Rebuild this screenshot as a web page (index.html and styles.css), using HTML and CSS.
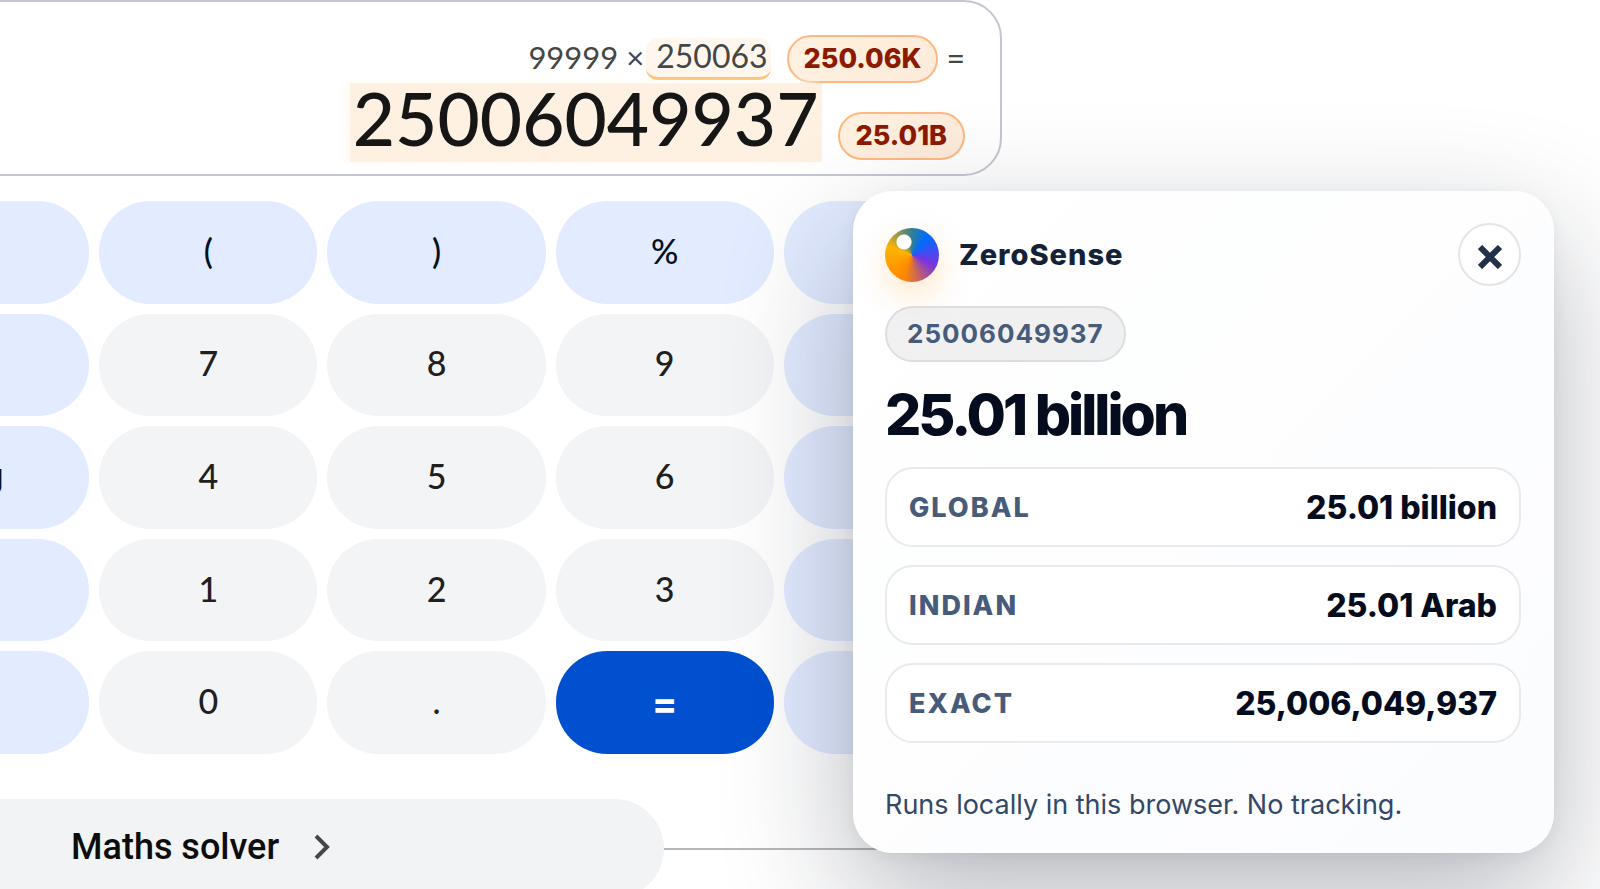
FILE: index.html
```html
<!DOCTYPE html>
<html lang="en">
<head>
    <meta charset="UTF-8">
    <title>ZeroSense</title>
    <link rel="stylesheet" href="styles.css">
</head>
<body>
    <main class="calculator">
        <div class="display">
            <div class="expression">
                <span class="term">99999 ×</span>
                <span class="operand">250063</span>
                <span class="chip">250.06K</span>
                <span class="equals">=</span>
            </div>
            <div class="answer">
                <span class="result">25006049937</span>
                <span class="chip">25.01B</span>
            </div>
        </div>

        <div class="keys">
            <button class="key function" aria-label="factorial"></button>
            <button class="key function">(</button>
            <button class="key function">)</button>
            <button class="key function">%</button>
            <button class="key function" aria-label="all clear"></button>

            <button class="key function" aria-label="natural logarithm"></button>
            <button class="key">7</button>
            <button class="key">8</button>
            <button class="key">9</button>
            <button class="key function" aria-label="divide"></button>

            <button class="key function word">log</button>
            <button class="key">4</button>
            <button class="key">5</button>
            <button class="key">6</button>
            <button class="key function" aria-label="multiply"></button>

            <button class="key function" aria-label="square root"></button>
            <button class="key">1</button>
            <button class="key">2</button>
            <button class="key">3</button>
            <button class="key function" aria-label="subtract"></button>

            <button class="key function" aria-label="power"></button>
            <button class="key">0</button>
            <button class="key">.</button>
            <button class="key submit">=</button>
            <button class="key function" aria-label="add"></button>
        </div>

        <div class="more">
            <a class="solver" href="#">
                Maths solver
                <svg class="chevron" width="16" height="26" viewBox="0 0 16 26" fill="none" stroke="#444746" stroke-width="4">
                    <path d="M2 2 L13 13 L2 24"/>
                </svg>
            </a>
            <div class="line"></div>
        </div>
    </main>

    <section class="card">
        <header class="card-header">
            <div class="logo"></div>
            <div class="brand">ZeroSense</div>
            <button class="close" aria-label="Close">
                <svg width="24" height="24" viewBox="0 0 24 24" stroke="#22314a" stroke-width="6">
                    <path d="M2 2 L22 22 M22 2 L2 22"/>
                </svg>
            </button>
        </header>
        <div class="source">25006049937</div>
        <h1 class="headline">25.01 billion</h1>
        <dl class="rows">
            <div class="row"><dt>GLOBAL</dt><dd>25.01 billion</dd></div>
            <div class="row"><dt>INDIAN</dt><dd>25.01 Arab</dd></div>
            <div class="row"><dt>EXACT</dt><dd>25,006,049,937</dd></div>
        </dl>
        <p class="note">Runs locally in this browser. No tracking.</p>
    </section>
</body>
</html>
```

FILE: styles.css
```css
* {
    box-sizing: border-box;
}
body {
    margin: 0;
    height: 100vh;
    overflow: hidden;
    position: relative;
    background: #ffffff;
    font-family: Lato, "Open Sans", sans-serif;
    color: #1f1f1f;
}

/* Calculator, runs off the left edge */
.calculator {
    margin-left: -129px;
    margin-right: 598px;
}
.display {
    display: flex;
    flex-direction: column;
    align-items: flex-end;
    padding: 33px 35px 12px;
    border: 2px solid #c4c7cf;
    border-radius: 38px;
}
.expression {
    display: flex;
    align-items: center;
    height: 48px;
    font-size: 32px;
    line-height: 36px;
    color: #444746;
}
.term {
    padding-bottom: 4px;
    font-size: 31px;
}
.operand {
    margin-left: 2px;
    margin-right: 16px;
    padding: 0 3px 3px 10px;
    border-bottom: 3px solid #fdba5c;
    border-radius: 12px;
    background: #fff7ee;
}
.equals {
    margin-left: 8px;
    padding-bottom: 2px;
}
.chip {
    padding: 0 15px;
    border: 2px solid #ffb87f;
    border-radius: 24px;
    background: linear-gradient(135deg, #fff1e0, #fdeadb);
    font: 800 27px/44px Inter, sans-serif;
    color: #8b1a00;
}
.answer {
    display: flex;
    align-items: flex-end;
    gap: 16px;
}
.answer .chip {
    margin-bottom: 2px;
    padding: 0 16px;
}
.result {
    padding: 0 3px 8px;
    background: #fff1e1;
    box-shadow: -6px 0 10px #fffaf4;
    font-size: 73px;
    font-weight: 500;
    line-height: 71px;
    color: #161616;
}
.keys {
    display: grid;
    grid-template-columns: repeat(5, 1fr);
    grid-auto-rows: 1fr;
    gap: 10px;
    height: 553px;
    margin-top: 25px;
}
.key {
    padding: 0 0 4px;
    border: 0;
    border-radius: 51px;
    background: #f3f4f6;
    font-family: Lato, "Open Sans", sans-serif;
    font-size: 34px;
    font-weight: 500;
    color: #1f1f1f;
}
.function {
    background: #e2ebff;
    color: #041022;
}
.word {
    font-family: Roboto, sans-serif;
    font-weight: 400;
}
.submit {
    padding: 0;
    background: #0050d0;
    font-family: Inter, sans-serif;
    font-size: 38px;
    font-weight: 700;
    color: #ffffff;
}
.more {
    display: flex;
    align-items: center;
    margin-top: 45px;
}
.solver {
    display: flex;
    align-items: center;
    justify-content: space-between;
    width: 793px;
    height: 99px;
    padding: 0 334px 4px 200px;
    border-radius: 0 50px 50px 0;
    background: #f1f3f5;
    font: 500 36px/44px Roboto, sans-serif;
    color: #0d0d0d;
    text-decoration: none;
    white-space: nowrap;
}
.line {
    flex: 1;
    height: 2px;
    background: #b4b7ba;
}

/* Popover card */
.card {
    position: absolute;
    top: 191px;
    right: 46px;
    width: 701px;
    padding: 32px 33px 30px 32px;
    border-radius: 40px;
    background: linear-gradient(135deg, #ffffff, #fbfcfe);
    box-shadow: 0 48px 128px rgba(15, 23, 42, 0.3), 0 4px 16px rgba(15, 23, 42, 0.06);
    font-family: Inter, sans-serif;
}
.card-header {
    display: flex;
    align-items: center;
    gap: 20px;
}
.logo {
    width: 54px;
    height: 54px;
    border-radius: 50%;
    background:
        radial-gradient(circle at 19px 14px, #ffffff 7px, transparent 8px),
        conic-gradient(#2f7f94, #006bff 40deg, #7a33e0 115deg, #ff8800 200deg, #ffb300 290deg, #2f7f94);
    box-shadow: 0 12px 32px rgba(255, 149, 0, 0.24);
}
.brand {
    flex: 1;
    font-size: 29px;
    font-weight: 800;
    letter-spacing: 1px;
    color: #142238;
}
.close {
    display: flex;
    align-items: center;
    justify-content: center;
    width: 63px;
    height: 63px;
    padding: 4px 0 0;
    border: 2px solid #e4e5e9;
    border-radius: 50%;
    background: #ffffff;
}
.source {
    width: fit-content;
    margin-top: 20px;
    padding: 0 20px;
    border: 2px solid #dddee2;
    border-radius: 28px;
    background: rgba(15, 23, 42, 0.06);
    font-size: 26px;
    font-weight: 700;
    line-height: 52px;
    letter-spacing: 1px;
    color: #475b7a;
}
.headline {
    margin: 20px 0;
    font-size: 57px;
    font-weight: 800;
    line-height: 65px;
    letter-spacing: -3px;
    color: #040c1e;
}
.rows {
    display: flex;
    flex-direction: column;
    gap: 18px;
    margin: 0;
}
.row {
    display: flex;
    align-items: center;
    justify-content: space-between;
    height: 80px;
    padding: 0 22px;
    border: 2px solid #e8eaed;
    border-radius: 28px;
    background: #ffffff;
}
dt {
    font-size: 27px;
    font-weight: 800;
    letter-spacing: 2px;
    color: #475b7a;
}
dd {
    margin: 0;
    font-size: 32px;
    font-weight: 800;
    color: #040c1e;
}
.note {
    margin: 44px 0 0;
    font-size: 27px;
    line-height: 36px;
    color: #334766;
}
```
